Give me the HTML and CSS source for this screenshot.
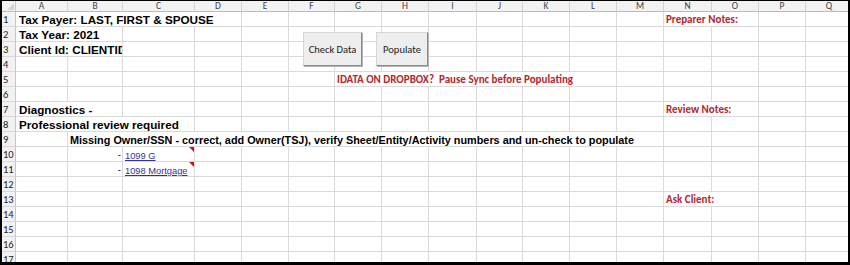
FILE: index.html
```html
<!DOCTYPE html>
<html>
<head>
<meta charset="utf-8">
<title>Diagnostics</title>
<link rel="stylesheet" href="styles.css">
</head>
<body>
<div class="sheet">
  <div class="row hdr">
    <div class="corner"></div>
    <div class="ch">A</div><div class="ch">B</div><div class="ch">C</div><div class="ch">D</div><div class="ch">E</div><div class="ch">F</div><div class="ch">G</div><div class="ch">H</div><div class="ch">I</div><div class="ch">J</div><div class="ch">K</div><div class="ch">L</div><div class="ch">M</div><div class="ch">N</div><div class="ch">O</div><div class="ch">P</div><div class="ch">Q</div>
  </div>
  <div class="row">
    <div class="rh">1</div>
    <div class="c s4 big">Tax Payer: LAST, FIRST &amp; SPOUSE</div>
    <div class="c"></div><div class="c"></div><div class="c"></div><div class="c"></div><div class="c"></div><div class="c"></div><div class="c"></div><div class="c"></div><div class="c"></div>
    <div class="c s2 red">Preparer Notes:</div>
    <div class="c"></div><div class="c"></div>
  </div>
  <div class="row">
    <div class="rh">2</div>
    <div class="c s2 big">Tax Year: 2021</div>
    <div class="c"></div><div class="c"></div><div class="c"></div><div class="c"></div><div class="c"></div><div class="c"></div><div class="c"></div><div class="c"></div><div class="c"></div><div class="c"></div><div class="c"></div><div class="c"></div><div class="c"></div><div class="c"></div><div class="c"></div>
  </div>
  <div class="row">
    <div class="rh">3</div>
    <div class="c s2 big">Client Id: CLIENTID</div>
    <div class="c"></div><div class="c"></div><div class="c"></div><div class="c"></div><div class="c"></div><div class="c"></div><div class="c"></div><div class="c"></div><div class="c"></div><div class="c"></div><div class="c"></div><div class="c"></div><div class="c"></div><div class="c"></div><div class="c"></div>
  </div>
  <div class="row">
    <div class="rh">4</div>
    <div class="c"></div><div class="c"></div><div class="c"></div><div class="c"></div><div class="c"></div><div class="c"></div><div class="c"></div><div class="c"></div><div class="c"></div><div class="c"></div><div class="c"></div><div class="c"></div><div class="c"></div><div class="c"></div><div class="c"></div><div class="c"></div><div class="c"></div>
  </div>
  <div class="row">
    <div class="rh">5</div>
    <div class="c"></div><div class="c"></div><div class="c"></div><div class="c"></div><div class="c"></div><div class="c"></div>
    <div class="c s6 red">IDATA ON DROPBOX?&nbsp; Pause Sync before Populating</div>
    <div class="c"></div><div class="c"></div><div class="c"></div><div class="c"></div><div class="c"></div>
  </div>
  <div class="row">
    <div class="rh">6</div>
    <div class="c"></div><div class="c"></div><div class="c"></div><div class="c"></div><div class="c"></div><div class="c"></div><div class="c"></div><div class="c"></div><div class="c"></div><div class="c"></div><div class="c"></div><div class="c"></div><div class="c"></div><div class="c"></div><div class="c"></div><div class="c"></div><div class="c"></div>
  </div>
  <div class="row">
    <div class="rh">7</div>
    <div class="c s2 big">Diagnostics -</div>
    <div class="c"></div><div class="c"></div><div class="c"></div><div class="c"></div><div class="c"></div><div class="c"></div><div class="c"></div><div class="c"></div><div class="c"></div><div class="c"></div><div class="c"></div>
    <div class="c s2 red">Review Notes:</div>
    <div class="c"></div><div class="c"></div>
  </div>
  <div class="row">
    <div class="rh">8</div>
    <div class="c s3 big">Professional review required</div>
    <div class="c"></div><div class="c"></div><div class="c"></div><div class="c"></div><div class="c"></div><div class="c"></div><div class="c"></div><div class="c"></div><div class="c"></div><div class="c"></div><div class="c"></div><div class="c"></div><div class="c"></div><div class="c"></div>
  </div>
  <div class="row">
    <div class="rh">9</div>
    <div class="c"></div>
    <div class="c s12 msg">Missing Owner/SSN - correct, add Owner(TSJ), verify Sheet/Entity/Activity numbers and un-check to populate</div>
    <div class="c"></div><div class="c"></div><div class="c"></div><div class="c"></div>
  </div>
  <div class="row">
    <div class="rh">10</div>
    <div class="c"></div>
    <div class="c dash">-</div>
    <div class="c note"><a class="link" href="#">1099 G</a></div>
    <div class="c"></div><div class="c"></div><div class="c"></div><div class="c"></div><div class="c"></div><div class="c"></div><div class="c"></div><div class="c"></div><div class="c"></div><div class="c"></div><div class="c"></div><div class="c"></div><div class="c"></div><div class="c"></div>
  </div>
  <div class="row">
    <div class="rh">11</div>
    <div class="c"></div>
    <div class="c dash">-</div>
    <div class="c note"><a class="link" href="#">1098 Mortgage</a></div>
    <div class="c"></div><div class="c"></div><div class="c"></div><div class="c"></div><div class="c"></div><div class="c"></div><div class="c"></div><div class="c"></div><div class="c"></div><div class="c"></div><div class="c"></div><div class="c"></div><div class="c"></div><div class="c"></div>
  </div>
  <div class="row">
    <div class="rh">12</div>
    <div class="c"></div><div class="c"></div><div class="c"></div><div class="c"></div><div class="c"></div><div class="c"></div><div class="c"></div><div class="c"></div><div class="c"></div><div class="c"></div><div class="c"></div><div class="c"></div><div class="c"></div><div class="c"></div><div class="c"></div><div class="c"></div><div class="c"></div>
  </div>
  <div class="row">
    <div class="rh">13</div>
    <div class="c"></div><div class="c"></div><div class="c"></div><div class="c"></div><div class="c"></div><div class="c"></div><div class="c"></div><div class="c"></div><div class="c"></div><div class="c"></div><div class="c"></div><div class="c"></div><div class="c"></div>
    <div class="c s2 red">Ask Client:</div>
    <div class="c"></div><div class="c"></div>
  </div>
  <div class="row">
    <div class="rh">14</div>
    <div class="c"></div><div class="c"></div><div class="c"></div><div class="c"></div><div class="c"></div><div class="c"></div><div class="c"></div><div class="c"></div><div class="c"></div><div class="c"></div><div class="c"></div><div class="c"></div><div class="c"></div><div class="c"></div><div class="c"></div><div class="c"></div><div class="c"></div>
  </div>
  <div class="row">
    <div class="rh">15</div>
    <div class="c"></div><div class="c"></div><div class="c"></div><div class="c"></div><div class="c"></div><div class="c"></div><div class="c"></div><div class="c"></div><div class="c"></div><div class="c"></div><div class="c"></div><div class="c"></div><div class="c"></div><div class="c"></div><div class="c"></div><div class="c"></div><div class="c"></div>
  </div>
  <div class="row">
    <div class="rh">16</div>
    <div class="c"></div><div class="c"></div><div class="c"></div><div class="c"></div><div class="c"></div><div class="c"></div><div class="c"></div><div class="c"></div><div class="c"></div><div class="c"></div><div class="c"></div><div class="c"></div><div class="c"></div><div class="c"></div><div class="c"></div><div class="c"></div><div class="c"></div>
  </div>
  <div class="row">
    <div class="rh">17</div>
    <div class="c"></div><div class="c"></div><div class="c"></div><div class="c"></div><div class="c"></div><div class="c"></div><div class="c"></div><div class="c"></div><div class="c"></div><div class="c"></div><div class="c"></div><div class="c"></div><div class="c"></div><div class="c"></div><div class="c"></div><div class="c"></div><div class="c"></div>
  </div>

  <button class="btn btn-check" type="button">Check Data</button>
  <button class="btn btn-populate" type="button">Populate</button>
</div>
</body>
</html>
```

FILE: styles.css
```css
* {
  box-sizing: border-box;
  margin: 0;
  padding: 0;
}

html, body {
  width: 850px;
  height: 265px;
  overflow: hidden;
  background: #000;
}

body {
  padding: 1px 2px 3px 2px;
}

.sheet {
  position: relative;
  width: 846px;
  height: 261px;
  overflow: hidden;
  background: #fff;
  font-family: "Liberation Sans", Arial, sans-serif;
  color: #000;
}

.row {
  display: grid;
  grid-template-columns: 14px 52px 55px 72px 47px 47px 46px 47px 47px 48px 46px 47px 47px 47px 48px 47px 47px 47px;
  height: 15px;
}

.row.hdr {
  height: 11px;
}

.corner {
  position: relative;
  background: #f2f2f2;
  border-right: 1px solid #c6c6c6;
  border-bottom: 1px solid #bcbcbc;
}

.corner::after {
  content: "";
  position: absolute;
  right: 1px;
  bottom: 1px;
  border-left: 7px solid transparent;
  border-bottom: 7px solid #d4d4d4;
}

.ch {
  background: #f2f2f2;
  border-right: 1px solid #d4d4d4;
  border-bottom: 1px solid #bcbcbc;
  text-align: center;
  font-family: "Carlito", "Lato", sans-serif;
  font-size: 9.5px;
  line-height: 10px;
  color: #444;
}

.rh {
  background: #f2f2f2;
  border-right: 1px solid #c6c6c6;
  border-bottom: 1px solid #d8d8d8;
  font-family: "Carlito", "Lato", sans-serif;
  font-size: 10.5px;
  line-height: 15px;
  color: #222;
  padding-left: 1px;
  white-space: nowrap;
  overflow: hidden;
}

.c {
  border-right: 1px solid #dadada;
  border-bottom: 1px solid #dadada;
  white-space: nowrap;
  overflow: hidden;
  padding-left: 2px;
  padding-top: 1px;
  font-size: 11px;
  line-height: 14px;
}

.s2 { grid-column: span 2; }
.s3 { grid-column: span 3; }
.s4 { grid-column: span 4; }
.s6 { grid-column: span 6; }
.s12 { grid-column: span 12; }

.big {
  font-weight: bold;
  font-size: 11.7px;
  padding-left: 3px;
}

.msg {
  font-weight: bold;
  font-size: 10.85px;
}

.red {
  font-family: "Carlito", "Lato", sans-serif;
  font-weight: bold;
  font-size: 11px;
  color: #b5262e;
  padding-left: 2px;
}

.dash {
  text-align: right;
  padding-right: 1px;
  font-size: 9.5px;
}

.note {
  position: relative;
}

.note::after {
  content: "";
  position: absolute;
  top: 0;
  right: 0;
  border-left: 5px solid transparent;
  border-top: 5px solid #c8101a;
}

.link {
  color: #33339e;
  text-decoration: underline;
  font-size: 9.3px;
}

.btn {
  position: absolute;
  top: 31px;
  height: 34px;
  background: #eeeeee;
  border: 1px solid #d6d6d6;
  border-right-color: #8c8c8c;
  border-bottom-color: #8c8c8c;
  box-shadow: 1px 1px 0 #b4b4b4;
  font-family: "Carlito", "Lato", sans-serif;
  font-size: 10.5px;
  color: #222;
  text-align: center;
  padding: 0;
}

.btn-check {
  left: 301px;
  width: 59px;
}

.btn-populate {
  left: 374px;
  width: 52px;
}
```
